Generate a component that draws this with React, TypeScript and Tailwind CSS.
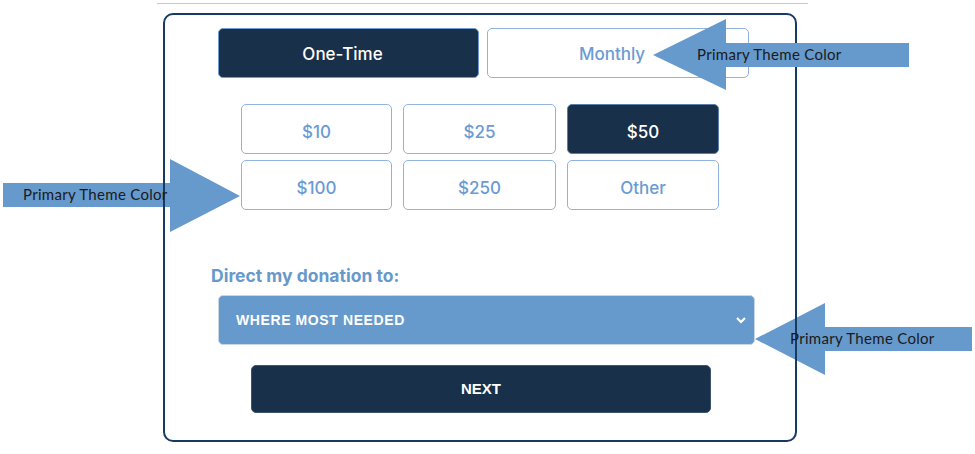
import React from "react";

const amounts = ["$10", "$25", "$50", "$100", "$250", "Other"];

function Arrow({ points }: { points: string }) {
  return <polygon points={points} fill="#6699cc" />;
}

export default function App() {
  return (
    <div className="relative w-[975px] h-[454px] bg-white overflow-hidden" style={{ fontFamily: "Inter, 'Liberation Sans', sans-serif" }}>
      <div className="ml-[157px] mt-[3px] w-[651px] h-px bg-[#c8c8c8]" />
      <div className="ml-[163px] mt-[9px] w-[634px] h-[429px] rounded-[10px] border-2 border-[#173a62] bg-white">
        <div className="flex gap-2 ml-[53px] mt-[13px]">
          <button className="w-[261px] h-[50px] pr-[12px] pt-[4px] rounded-[5px] bg-[#183049] border border-[#6f9bd0] text-white text-[17px] font-medium">
            One-Time
          </button>
          <button className="w-[262px] h-[50px] pr-[12px] pt-[4px] rounded-[5px] bg-white border border-[#8fb3de] text-[#6b9bd2] text-[17px] font-medium">
            Monthly
          </button>
        </div>
        <div className="ml-[76px] mt-[26px] grid grid-cols-[151px_153px_152px] gap-x-[11px] gap-y-[6px] w-[478px]">
          {amounts.map((a) => (
            <button
              key={a}
              className={
                a === "$50"
                  ? "h-[50px] pt-[7px] rounded-[5px] bg-[#183049] border border-[#5b7fa8] text-white text-[17px] font-medium"
                  : "h-[50px] pt-[7px] rounded-[5px] bg-white border border-[#8fb3de] text-[#6b9bd2] text-[17px] font-medium"
              }
            >
              {a}
            </button>
          ))}
        </div>
        <div className="ml-[46px] mt-[55px] text-[17.5px] leading-[22px] font-bold text-[#6799cb]">Direct my donation to:</div>
        <div className="ml-[53px] mt-[8px] w-[537px] h-[50px] rounded-[5px] bg-[#6699cc] border border-[#c9d6e4] flex items-center justify-between pl-[17px] pr-[7px]">
          <span className="text-white text-[14px] font-bold tracking-[0.6px]" style={{ fontFamily: "'Liberation Sans', Arial, sans-serif" }}>WHERE MOST NEEDED</span>
          <svg width="12" height="10" viewBox="0 0 12 10">
            <polyline points="2,3 6,7 10,3" fill="none" stroke="white" strokeWidth="2.2" />
          </svg>
        </div>
        <div className="ml-[86px] mt-[20px] w-[460px] h-[48px] rounded-[5px] bg-[#183049] border border-[#3d5670] flex items-center justify-center text-white text-[15px] font-bold" style={{ fontFamily: "'Liberation Sans', Arial, sans-serif" }}>
          NEXT
        </div>
      </div>

      <svg className="absolute left-0 top-0" width="975" height="454">
        <Arrow points="653,55 726,19 726,43 909,43 909,67 726,67 726,90" />
        <Arrow points="3,183 170,183 170,159 240,196 170,232 170,207 3,207" />
        <Arrow points="755,339 825,303 825,327 972,327 972,351 825,351 825,375" />
        <line x1="164" y1="159" x2="164" y2="232" stroke="#173a62" strokeWidth="2" />
        <line x1="796" y1="303" x2="796" y2="375" stroke="#173a62" strokeWidth="2" />
      </svg>
      <span className="absolute left-[697px] top-[44px] text-[15px] leading-[20px] tracking-[0.3px] text-[#1a1a1a]" style={{ fontFamily: "Lato, 'Open Sans', sans-serif" }}>Primary Theme Color</span>
      <span className="absolute left-[23px] top-[184px] text-[15px] leading-[20px] tracking-[0.3px] text-[#1a1a1a]" style={{ fontFamily: "Lato, 'Open Sans', sans-serif" }}>Primary Theme Color</span>
      <span className="absolute left-[790px] top-[328px] text-[15px] leading-[20px] tracking-[0.3px] text-[#1a1a1a]" style={{ fontFamily: "Lato, 'Open Sans', sans-serif" }}>Primary Theme Color</span>
    </div>
  );
}
